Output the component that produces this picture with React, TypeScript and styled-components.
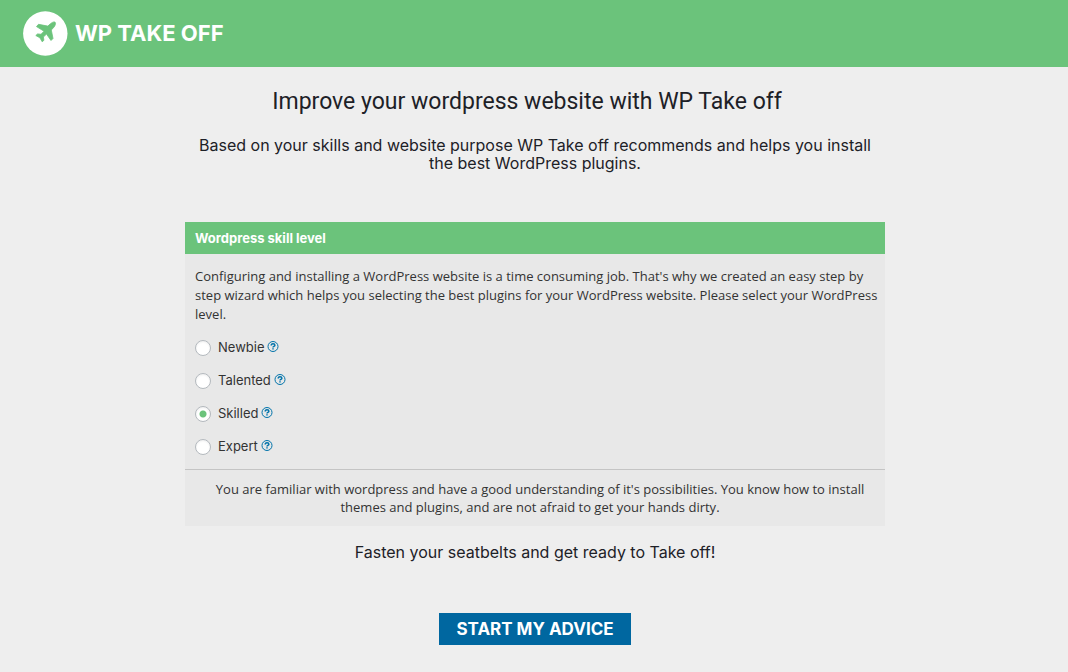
import React, { useState } from 'react';
import styled, { createGlobalStyle } from 'styled-components';

const GlobalStyle = createGlobalStyle`
  * { box-sizing: border-box; }
  body { margin: 0; background: #eeeeee; color: #333; font: 13px/19px Inter, sans-serif; }
`;

const Header = styled.header`
  display: flex; align-items: center; gap: 7px; height: 67px; padding: 0 23px; background: #6bc37b; color: #fff;
`;
const Logo = styled.svg`width: 45px; height: 45px; flex: none;`;
const Brand = styled.span`padding-bottom: 2px; font-size: 22px; line-height: 30px; font-weight: 700;`;
const Main = styled.main`
  display: flex; flex-direction: column; align-items: center; width: 100%; max-width: 702px; margin: 0 auto; padding: 19px 0 27px 2px;
`;
const Title = styled.h1`margin: 0 16px 0 0; font: 400 23px/32px Roboto, sans-serif; color: #1d2127;`;
const Lead = styled.p<{ $top: number }>`
  margin: ${p => p.$top}px 0 0; font-size: 16px; line-height: 18px; color: #1d2127; text-align: center;
`;
const Panel = styled.section`width: 100%; margin-top: 50px; background: #e8e8e8;`;
const PanelTitle = styled.h2`margin: 0; padding: 0 10px; background: #6bc37b; color: #fff; font-size: 13px; line-height: 32px; font-weight: 700;`;
const Intro = styled.p`margin: 0; padding: 13px 0 0 10px; font-family: "Open Sans", sans-serif;`;
const Options = styled.div`padding: 7px 10px 6px; display: flex; flex-direction: column;`;
const Option = styled.div`display: flex; align-items: center; height: 33px;`;
const Radio = styled.input`
  appearance: none; width: 16px; height: 16px; margin: 0 7px 0 0; border: 1px solid #b4b9be; border-radius: 50%; background: #fff;
  box-shadow: inset 0 1px 2px rgba(0, 0, 0, 0.07);
  &:checked { background: radial-gradient(circle, #6bc37b 0 3px, #fff 4px); }
`;
const Help = styled.svg`width: 12px; height: 12px; margin: 0 0 1px 3px;`;
const Note = styled.p`
  margin: 0; padding: 10px 20px 10px 10px; border-top: 1px solid #c4c4c4; line-height: 18px;
  text-align: center; text-indent: 20px; font-family: "Open Sans", sans-serif;
`;
const Start = styled.button`
  margin-top: 52px; padding: 0 17px; border: 0; background: #0067a0; color: #fff; font: 700 17px/32px Inter, sans-serif;
`;

const levels = ['Newbie', 'Talented', 'Skilled', 'Expert'];

export default function App() {
  const [level, setLevel] = useState('Skilled');
  return (
    <>
      <GlobalStyle />
      <Header>
        <Logo viewBox="0 0 45 45" aria-hidden="true">
          <circle cx="22.300" cy="22.500" r="22.200" fill="#fff" />
          <path transform="translate(11.300 10)" fill="#6bc37b" d="M20.800 1.200c1 1 0 3.700-1.400 5.200L17 9l1.700 8.500-2 2-4.500-6.400-3.100 2.900.5 3.300-1.700 1.500-2.300-4L1.500 14.500l1.800-1.600 3.400.4 3-3.100L2.200 5.600l2-2.300 9.300 1.800L15.900 3c1.500-1.500 4-2.700 4.900-1.800Z" stroke="#6bc37b" strokeWidth=".8" strokeLinejoin="round" />
        </Logo>
        <Brand>WP TAKE OFF</Brand>
      </Header>
      <Main>
        <Title>Improve your wordpress website with WP Take off</Title>
        <Lead $top={18}>Based on your skills and website purpose WP Take off recommends and helps you install<br />the best WordPress plugins.</Lead>
        <Panel>
          <PanelTitle>Wordpress skill level</PanelTitle>
          <Intro>Configuring and installing a WordPress website is a time consuming job. That's why we created an easy step by step wizard which helps you selecting the best plugins for your WordPress website. Please select your WordPress level.</Intro>
          <Options>
            {levels.map(l => (
              <Option key={l}>
                <Radio type="radio" name="level" id={l} checked={level === l} onChange={() => setLevel(l)} />
                <label htmlFor={l}>{l}</label>
                <Help viewBox="0 0 12 12" fill="none" stroke="#0073aa" aria-hidden="true">
                  <circle cx="6" cy="5.500" r="5" />
                  <path d="M4.200 4.500c0-2.500 3.700-2.200 3.700-.3C7.900 5.600 6 5.300 6 6.600M6 7.300v1.300" strokeWidth="1.500" />
                </Help>
              </Option>
            ))}
          </Options>
          <Note>You are familiar with wordpress and have a good understanding of it's possibilities. You know how to install themes and plugins, and are not afraid to get your hands dirty.</Note>
        </Panel>
        <Lead $top={17}>Fasten your seatbelts and get ready to Take off!</Lead>
        <Start type="button">START MY ADVICE</Start>
      </Main>
    </>
  );
}
